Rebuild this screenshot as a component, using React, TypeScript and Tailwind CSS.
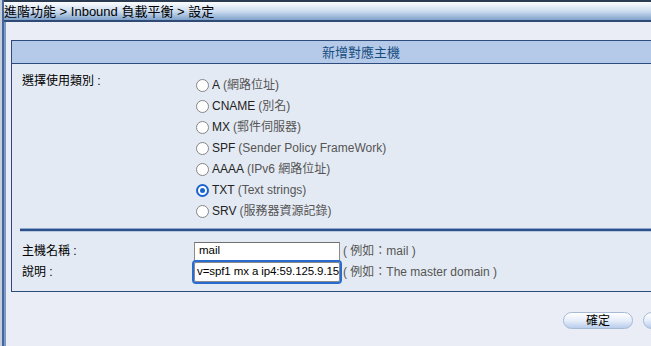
import React from "react";

function Radio({ checked }: { checked?: boolean }) {
  return checked ? (
    <span className="w-[13px] h-[13px] rounded-full border-2 border-[#1a64d0] bg-white flex items-center justify-center shrink-0 mt-[2px]">
      <span className="w-[5px] h-[5px] rounded-full bg-[#1a64d0]" />
    </span>
  ) : (
    <span className="w-[13px] h-[13px] rounded-full border-[1.5px] border-[#858585] bg-white shrink-0 mt-[2px]" />
  );
}

const options: { main: string; sub: string; checked?: boolean }[] = [
  { main: "A", sub: "(網路位址)" },
  { main: "CNAME", sub: "(別名)" },
  { main: "MX", sub: "(郵件伺服器)" },
  { main: "SPF", sub: "(Sender Policy FrameWork)" },
  { main: "AAAA", sub: "(IPv6 網路位址)" },
  { main: "TXT", sub: "(Text strings)", checked: true },
  { main: "SRV", sub: "(服務器資源記錄)" },
];

function Btn({ label }: { label?: string }) {
  return (
    <div className="w-[70px] h-[17px] shrink-0 rounded-full border border-[#a7b9d5] bg-gradient-to-b from-[#ffffff] via-[#e6eefa] to-[#b9cdec] flex items-center justify-center text-[12px] leading-none text-black">
      {label}
    </div>
  );
}

export default function App() {
  return (
    <div className="w-[651px] h-[346px] overflow-hidden bg-[#eaedf6] flex font-['Liberation_Sans','Noto_Sans_CJK_TC',sans-serif] text-[12px] text-black">
      <div className="flex h-full shrink-0">
        <div className="w-[2px] bg-[#c4cedd]" />
        <div className="w-[2px] bg-[#46669a]" />
      </div>
      <div className="flex-1 min-w-0 flex flex-col">
        <div className="h-[22px] shrink-0 border-t-2 border-b-2 border-t-[#2a3b52] border-b-[#2e4a75] bg-gradient-to-b from-[#fbfdff] via-[#cfdef0] to-[#7fa2cc] flex items-center text-[13px] leading-none text-black whitespace-nowrap">
          進階功能 &gt; Inbound 負載平衡 &gt; 設定
        </div>
        <div className="flex-1 flex">
          <div className="w-[2px] bg-[#7d9bc8] shrink-0" />
          <div className="flex-1 min-w-0 pl-[5px] pt-[18px]">
            <div className="w-[700px] border border-[#2d4c7d] bg-[#e4eaf3]">
              <div className="h-[23px] bg-[#b5c9e9] border-b border-[#2d4c7d] flex items-center justify-center text-[13px] text-[#154d7f] leading-none">
                新增對應主機
              </div>
              <div className="pl-[10px] pt-[10px] pr-0 flex">
                <div className="w-[174px] shrink-0 leading-[14px] text-[12px] text-black">
                  選擇使用類別 :
                </div>
                <div className="flex flex-col">
                  {options.map((o) => (
                    <div key={o.main} className="h-[21px] flex items-center gap-[3px] whitespace-nowrap">
                      <Radio checked={o.checked} />
                      <span className="text-[#222]">{o.main}</span>
                      <span className="text-[#555]">{o.sub}</span>
                    </div>
                  ))}
                </div>
              </div>
              <div className="ml-[8px] mt-[7px]">
                <div className="h-[1px] bg-[#8fa8cf]" />
                <div className="h-[2px] bg-[#2f5189]" />
                <div className="h-[1px] bg-[#b7c8e2]" />
              </div>
              <div className="pl-[10px] pt-[9px] pb-[8px] flex flex-col">
                <div className="h-[20px] flex items-center">
                  <div className="w-[172px] shrink-0">主機名稱 :</div>
                  <div className="w-[146px] h-[19px] bg-white border border-[#8a8a8a] border-t-[#6f6f6f] flex items-center px-[4px] text-[11.5px] text-black shrink-0">
                    mail
                  </div>
                  <span className="ml-[3px] text-[#555] whitespace-nowrap">( 例如：mail )</span>
                </div>
                <div className="h-[22px] flex items-center">
                  <div className="w-[172px] shrink-0">說明 :</div>
                  <div className="w-[146px] h-[20px] bg-white border border-[#8a8a8a] outline-2 outline-[#2a6bd0] rounded-[2px] flex items-center pl-[2px] text-[11.5px] tracking-[-0.1px] text-black shrink-0 overflow-hidden whitespace-nowrap">
                    v=spf1 mx a ip4:59.125.9.15
                  </div>
                  <span className="ml-[3px] text-[#555] whitespace-nowrap">( 例如：The master domain )</span>
                </div>
              </div>
            </div>
            <div className="mt-[20px] flex gap-[10px] pl-[552px]">
              <Btn label="確定" />
              <Btn />
            </div>
          </div>
        </div>
      </div>
    </div>
  );
}
